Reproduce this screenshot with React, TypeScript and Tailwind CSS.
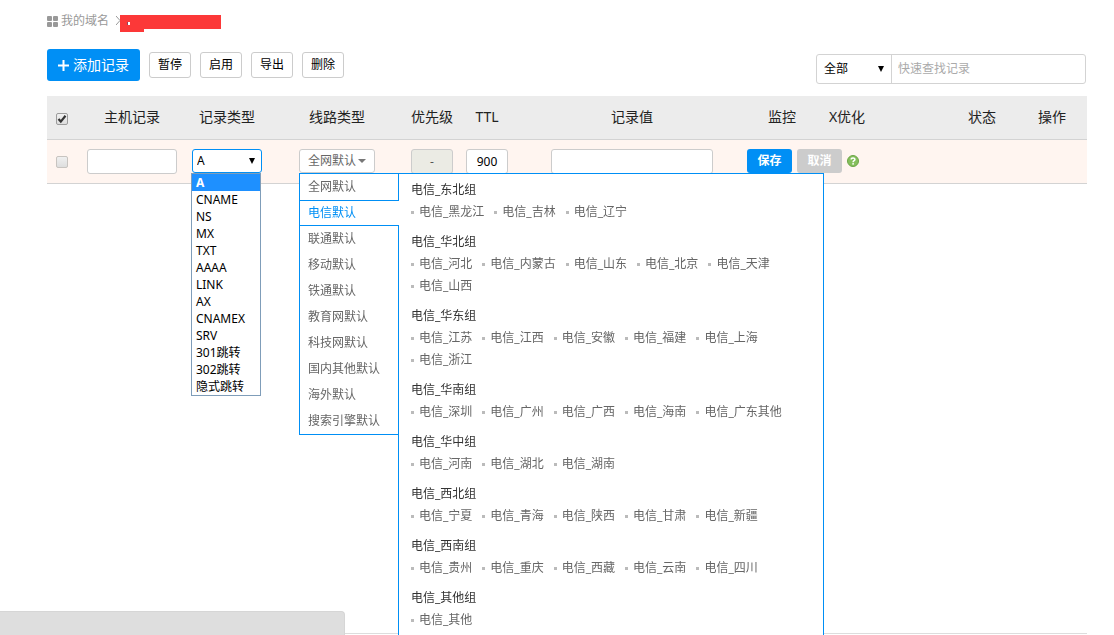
import { useState } from 'react'

const recordTypes = ['A', 'CNAME', 'NS', 'MX', 'TXT', 'AAAA', 'LINK', 'AX', 'CNAMEX', 'SRV', '301跳转', '302跳转', '隐式跳转']

const lines = ['全网默认', '电信默认', '联通默认', '移动默认', '铁通默认', '教育网默认', '科技网默认', '国内其他默认', '海外默认', '搜索引擎默认']

const groups = [
  { name: '电信_东北组', items: ['电信_黑龙江', '电信_吉林', '电信_辽宁'] },
  { name: '电信_华北组', items: ['电信_河北', '电信_内蒙古', '电信_山东', '电信_北京', '电信_天津', '电信_山西'] },
  { name: '电信_华东组', items: ['电信_江苏', '电信_江西', '电信_安徽', '电信_福建', '电信_上海', '电信_浙江'] },
  { name: '电信_华南组', items: ['电信_深圳', '电信_广州', '电信_广西', '电信_海南', '电信_广东其他'] },
  { name: '电信_华中组', items: ['电信_河南', '电信_湖北', '电信_湖南'] },
  { name: '电信_西北组', items: ['电信_宁夏', '电信_青海', '电信_陕西', '电信_甘肃', '电信_新疆'] },
  { name: '电信_西南组', items: ['电信_贵州', '电信_重庆', '电信_西藏', '电信_云南', '电信_四川'] },
  { name: '电信_其他组', items: ['电信_其他'] },
]

function Arrow() {
  return (
    <svg className="pointer-events-none absolute right-[7px] top-1/2 -translate-y-1/2" width="6" height="8" viewBox="0 0 6 8">
      <path d="M0 1h6L3 7z" fill="#000" />
    </svg>
  )
}

function Check({ checked, onChange, label, dim }: any) {
  return (
    <span className="relative inline-block h-3 w-3 align-middle">
      <input
        type="checkbox"
        aria-label={label}
        checked={checked}
        onChange={onChange}
        className={
          'block h-3 w-3 appearance-none rounded-[2px] border bg-linear-to-b from-[#f0f0f0] to-[#dedede] ' +
          (dim ? 'border-[#c8c4c0]' : 'border-[#9c9c9c]')
        }
      />
      {checked && (
        <svg className="pointer-events-none absolute left-0 top-0" width="12" height="12" viewBox="0 0 12 12">
          <path d="M2.500 6l2.300 2.600L9.500 2.800" fill="none" stroke="#333" strokeWidth="2.200" />
        </svg>
      )}
    </span>
  )
}

function TypeSelect() {
  const [type, setType] = useState('A')
  return (
    <div className="relative mx-auto h-6 w-[70px] text-left">
      <select
        aria-label="记录类型"
        value={type}
        onChange={(e) => setType(e.target.value)}
        className="block h-6 w-full appearance-none rounded-[3px] border border-[#008ff5] bg-white pl-1 text-xs text-black outline-none"
      >
        {recordTypes.map((t) => (
          <option key={t}>{t}</option>
        ))}
      </select>
      <Arrow />
      <ul className="absolute -left-px top-full z-20 w-[70px] border border-[#7f9db9] bg-white text-xs leading-[17px] text-black">
        {recordTypes.map((t) => (
          <li key={t} onClick={() => setType(t)} className={t === type ? 'bg-[#1e90ff] pl-1 font-bold text-white' : 'pl-1'}>
            {t}
          </li>
        ))}
      </ul>
    </div>
  )
}

function LineMenu() {
  const [active, setActive] = useState('电信默认')
  return (
    <div className="relative mx-auto h-6 w-[76px] text-left">
      <button className="flex h-6 w-full items-center gap-0.5 whitespace-nowrap rounded-[3px] border border-[#ccc] bg-white pl-2 text-xs text-[#666]">
        全网默认
        <svg width="8" height="4" viewBox="0 0 8 4">
          <path d="M0 0h8L4 4z" fill="#777" />
        </svg>
      </button>
      <div className="absolute left-0 top-full z-10 flex w-[525px] text-xs">
        <ul className="z-10 w-[100px] shrink-0 self-start border-y border-l border-[#008ff5] bg-white text-[#666]">
          {lines.map((l) => (
            <li
              key={l}
              onClick={() => setActive(l)}
              className={
                l === active
                  ? 'h-[26px] border-y border-[#008ff5] bg-white pl-2 leading-6 text-[#008ff5]'
                  : 'h-[26px] border-r border-[#008ff5] pl-2 leading-[26px]'
              }
            >
              {l}
            </li>
          ))}
        </ul>
        <div className="-ml-px flex-1 border border-[#008ff5] bg-white px-3 pb-4 pt-[5px]">
          {groups.map((g) => (
            <section key={g.name} className="mb-2 leading-[22px]">
              <h3 className="text-[#333]">{g.name}</h3>
              <ul className="flex flex-wrap gap-x-2.5">
                {g.items.map((item) => (
                  <li key={item} className="flex items-center gap-[5px]">
                    <span className="h-[3px] w-[3px] bg-[#bbb]" />
                    <a href="#" className="text-[#666]">{item}</a>
                  </li>
                ))}
              </ul>
            </section>
          ))}
        </div>
      </div>
    </div>
  )
}

export default function App() {
  const [all, setAll] = useState(true)
  const [row, setRow] = useState(false)
  const [ttl, setTtl] = useState('900')

  return (
    <main className="relative flex min-h-screen flex-col overflow-hidden bg-white pl-[47px] pr-[27px] font-['Noto_Sans','Noto_Sans_CJK_SC',sans-serif] text-xs text-[#222]">
      <nav className="mt-3 flex h-[18px] text-[#999]">
        <a href="#" className="flex items-center gap-[3px]">
          <svg width="11" height="11" viewBox="0 0 11 11" fill="#999">
            <rect width="5" height="5" rx="1" />
            <rect x="6" width="5" height="5" rx="1" />
            <rect y="6" width="5" height="5" rx="1" />
            <rect x="6" y="6" width="5" height="5" rx="1" />
          </svg>
          我的域名
        </a>
        <svg className="ml-[7px] mt-[3px] shrink-0" width="106" height="17" viewBox="0 0 106 17">
          <path d="M0 1l4 4.500L0 10" fill="none" stroke="#999" />
          <path d="M4 0h101v14H28v3H4z" fill="#fc3838" />
          <path d="M12 7h2v3h-2z" fill="#fff" />
          <path d="M11 7h1v3h-1z" fill="#8a4a60" />
        </svg>
      </nav>

      <div className="mt-[19px] flex items-start justify-between">
        <div className="flex items-center gap-[9px] text-black">
          <button className="flex h-8 w-[93px] items-center justify-center gap-1 whitespace-nowrap rounded-[3px] bg-[#008ff5] text-sm text-white">
            <svg width="11" height="11" viewBox="0 0 11 11">
              <path d="M5.500 0v11M0 5.500h11" stroke="#fff" strokeWidth="2" />
            </svg>
            添加记录
          </button>
          <button className="h-[26px] w-[42px] rounded-[3px] border border-[#ccc]">暂停</button>
          <button className="h-[26px] w-[42px] rounded-[3px] border border-[#ccc]">启用</button>
          <button className="h-[26px] w-[42px] rounded-[3px] border border-[#ccc]">导出</button>
          <button className="h-[26px] w-[42px] rounded-[3px] border border-[#ccc]">删除</button>
        </div>
        <div className="mr-px mt-[5px] flex h-[30px] w-[270px] rounded-[3px] border border-[#d3d3d3]">
          <div className="relative w-[75px] border-r border-[#d3d3d3]">
            <select aria-label="范围" className="h-full w-full appearance-none pl-[7px] text-black outline-none">
              <option>全部</option>
            </select>
            <Arrow />
          </div>
          <input aria-label="快速查找记录" placeholder="快速查找记录" className="min-w-0 flex-1 px-1.5 outline-none placeholder:text-[#aaa]" />
        </div>
      </div>

      <table className="mt-3 w-full table-fixed border-collapse text-center">
        <colgroup>
          <col className="w-[30px]" />
          <col className="w-[110px]" />
          <col className="w-20" />
          <col className="w-[140px]" />
          <col className="w-[50px]" />
          <col className="w-[60px]" />
          <col />
          <col className="w-[70px]" />
          <col className="w-[60px]" />
          <col className="w-[70px]" />
          <col className="w-[70px]" />
          <col className="w-[70px]" />
        </colgroup>
        <thead>
          <tr className="h-[43px] border-b border-[#d3d3d3] bg-[#ececec] text-sm *:whitespace-nowrap *:p-0 *:font-normal">
            <th><Check label="全选" checked={all} onChange={() => setAll(!all)} /></th>
            <th>主机记录</th>
            <th>记录类型</th>
            <th>线路类型</th>
            <th>优先级</th>
            <th>TTL</th>
            <th>记录值</th>
            <th>监控</th>
            <th>X优化</th>
            <th></th>
            <th>状态</th>
            <th>操作</th>
          </tr>
        </thead>
        <tbody>
          <tr className="h-11 border-b border-[#d3d3d3] bg-[#fff5f0] *:p-0">
            <td><Check label="选择记录" dim checked={row} onChange={() => setRow(!row)} /></td>
            <td><input aria-label="主机记录" className="mx-auto block h-[25px] w-[90px] rounded-[3px] border border-[#ccc] bg-white px-1" /></td>
            <td><TypeSelect /></td>
            <td><LineMenu /></td>
            <td><input aria-label="优先级" disabled value="-" className="mx-auto block h-[25px] w-[42px] rounded-[3px] border border-[#ccc] bg-[#ebebe4] text-center text-[#555]" /></td>
            <td><input aria-label="TTL" value={ttl} onChange={(e) => setTtl(e.target.value)} className="mx-auto block h-[25px] w-[42px] rounded-[3px] border border-[#ccc] bg-white text-center text-black" /></td>
            <td className="px-[34px]!"><input aria-label="记录值" className="block h-[25px] w-full rounded-[3px] border border-[#ccc] bg-white px-1" /></td>
            <td colSpan={5}>
              <div className="flex items-center gap-[5px]">
                <button className="h-6 w-[45px] rounded-[3px] bg-[#008ff5] font-bold text-white">保存</button>
                <button className="h-6 w-[45px] rounded-[3px] bg-[#ccc] font-bold text-white">取消</button>
                <button aria-label="帮助">
                  <svg width="12" height="12" viewBox="0 0 12 12">
                    <circle cx="6" cy="6" r="5.500" fill="#85bf5c" stroke="#6da548" />
                    <path d="M4.200 4.600C4.200 2.400 7.900 2.400 7.900 4.500C7.900 5.700 6.100 5.700 6.100 7.200" fill="none" stroke="#fff" strokeWidth="1.500" />
                    <rect x="5.300" y="8.100" width="1.600" height="1.500" fill="#fff" />
                  </svg>
                </button>
              </div>
            </td>
          </tr>
        </tbody>
      </table>

      <footer className="mt-auto h-0.5 border-t border-[#ddd]" />
      <div className="fixed bottom-0 left-0 h-6 w-[345px] rounded-tr border-r border-t border-[#d6d6d6] bg-[#dedede]" />
    </main>
  )
}
